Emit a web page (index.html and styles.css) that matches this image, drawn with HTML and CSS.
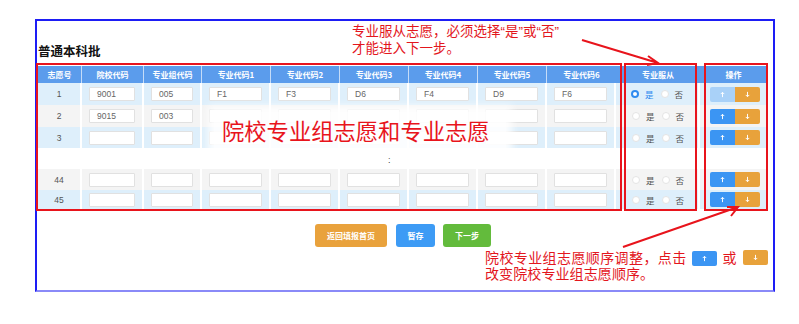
FILE: index.html
```html
<!DOCTYPE html>
<html lang="zh-CN">
<head>
<meta charset="utf-8">
<title>普通本科批</title>
<link rel="stylesheet" href="styles.css">
</head>
<body>
<div class="page">
  <div class="frame">
    <div class="head"><h1 class="title">普通本科批</h1></div>
    <div class="table">
      <div class="row hdr">
        <div class="c">志愿号</div><div class="c">院校代码</div><div class="c">专业组代码</div>
        <div class="c">专业代码1</div><div class="c">专业代码2</div><div class="c">专业代码3</div>
        <div class="c">专业代码4</div><div class="c">专业代码5</div><div class="c">专业代码6</div>
        <div class="c">专业服从</div><div class="c">操作</div>
      </div>
      <div class="row blue r1">
        <div class="c num">1</div>
        <div class="c"><span class="inp">9001</span></div><div class="c"><span class="inp">005</span></div>
        <div class="c"><span class="inp">F1</span></div><div class="c"><span class="inp">F3</span></div><div class="c"><span class="inp">D6</span></div>
        <div class="c"><span class="inp">F4</span></div><div class="c"><span class="inp">D9</span></div><div class="c"><span class="inp">F6</span></div>
        <div class="c radios"><span class="radio on"></span><span class="lbl on">是</span><span class="radio"></span><span class="lbl">否</span></div>
        <div class="c ops"><span class="btn up dis"><svg viewBox="0 0 8 8"><path d="M4 7V1.5M2 3.5L4 1.5 6 3.5" /></svg></span><span class="btn down"><svg viewBox="0 0 8 8"><path d="M4 1v5.5M2 4.5L4 6.5 6 4.5" /></svg></span></div>
      </div>
      <div class="row grey r2">
        <div class="c num">2</div>
        <div class="c"><span class="inp">9015</span></div><div class="c"><span class="inp">003</span></div>
        <div class="c"><span class="inp"></span></div><div class="c"><span class="inp"></span></div><div class="c"><span class="inp"></span></div>
        <div class="c"><span class="inp"></span></div><div class="c"><span class="inp"></span></div><div class="c"><span class="inp"></span></div>
        <div class="c radios"><span class="radio"></span><span class="lbl">是</span><span class="radio"></span><span class="lbl">否</span></div>
        <div class="c ops"><span class="btn up"><svg viewBox="0 0 8 8"><path d="M4 7V1.5M2 3.5L4 1.5 6 3.5" /></svg></span><span class="btn down"><svg viewBox="0 0 8 8"><path d="M4 1v5.5M2 4.5L4 6.5 6 4.5" /></svg></span></div>
      </div>
      <div class="row blue r3">
        <div class="c num">3</div>
        <div class="c"><span class="inp"></span></div><div class="c"><span class="inp"></span></div>
        <div class="c"><span class="inp"></span></div><div class="c"><span class="inp"></span></div><div class="c"><span class="inp"></span></div>
        <div class="c"><span class="inp"></span></div><div class="c"><span class="inp"></span></div><div class="c"><span class="inp"></span></div>
        <div class="c radios"><span class="radio"></span><span class="lbl">是</span><span class="radio"></span><span class="lbl">否</span></div>
        <div class="c ops"><span class="btn up"><svg viewBox="0 0 8 8"><path d="M4 7V1.5M2 3.5L4 1.5 6 3.5" /></svg></span><span class="btn down"><svg viewBox="0 0 8 8"><path d="M4 1v5.5M2 4.5L4 6.5 6 4.5" /></svg></span></div>
      </div>
      <div class="row gap"><span class="dots">:</span></div>
      <div class="row grey r44">
        <div class="c num">44</div>
        <div class="c"><span class="inp"></span></div><div class="c"><span class="inp"></span></div>
        <div class="c"><span class="inp"></span></div><div class="c"><span class="inp"></span></div><div class="c"><span class="inp"></span></div>
        <div class="c"><span class="inp"></span></div><div class="c"><span class="inp"></span></div><div class="c"><span class="inp"></span></div>
        <div class="c radios"><span class="radio"></span><span class="lbl">是</span><span class="radio"></span><span class="lbl">否</span></div>
        <div class="c ops"><span class="btn up"><svg viewBox="0 0 8 8"><path d="M4 7V1.5M2 3.5L4 1.5 6 3.5" /></svg></span><span class="btn down"><svg viewBox="0 0 8 8"><path d="M4 1v5.5M2 4.5L4 6.5 6 4.5" /></svg></span></div>
      </div>
      <div class="row blue r45">
        <div class="c num">45</div>
        <div class="c"><span class="inp"></span></div><div class="c"><span class="inp"></span></div>
        <div class="c"><span class="inp"></span></div><div class="c"><span class="inp"></span></div><div class="c"><span class="inp"></span></div>
        <div class="c"><span class="inp"></span></div><div class="c"><span class="inp"></span></div><div class="c"><span class="inp"></span></div>
        <div class="c radios"><span class="radio"></span><span class="lbl">是</span><span class="radio"></span><span class="lbl">否</span></div>
        <div class="c ops"><span class="btn up"><svg viewBox="0 0 8 8"><path d="M4 7V1.5M2 3.5L4 1.5 6 3.5" /></svg></span><span class="btn down"><svg viewBox="0 0 8 8"><path d="M4 1v5.5M2 4.5L4 6.5 6 4.5" /></svg></span></div>
      </div>
    </div>
    <div class="actions">
      <span class="abtn orange">返回填报首页</span>
      <span class="abtn blue-b">暂存</span>
      <span class="abtn green">下一步</span>
    </div>
  </div>

  <div class="box box-main"></div>
  <div class="box box-follow"></div>
  <div class="box box-op"></div>

  <div class="label-overlay">院校专业组志愿和专业志愿</div>

  <div class="note note-top">专业服从志愿，必须选择“是”或“否”<br>才能进入下一步。</div>

  <div class="note note-bottom">
    <div class="nl nl1"><span>院校专业组志愿顺序调整，点击</span><span class="nbtn up"><svg viewBox="0 0 8 8"><path d="M4 7V1.5M2 3.5L4 1.5 6 3.5" /></svg></span><span class="or">或</span><span class="nbtn down"><svg viewBox="0 0 8 8"><path d="M4 1v5.5M2 4.5L4 6.5 6 4.5" /></svg></span></div>
    <div class="nl nl2">改变院校专业组志愿顺序。</div>
  </div>

  <svg class="arrows" viewBox="0 0 799 324" width="799" height="324">
    <path d="M582 40 L658 63 M648 56 L658 63 L647 65" />
    <path d="M623 247 L738 207 M727 207 L738 207 L731 216" />
  </svg>
</div>
</body>
</html>
```
FILE: styles.css
```css
* { box-sizing: border-box; }
html, body { margin: 0; padding: 0; background: #fff; }
body { font-family: "Noto Sans CJK SC", "Noto Sans", sans-serif; }

.page { position: relative; width: 799px; height: 324px; overflow: hidden; }

.frame {
  margin: 19px 0 0 35px;
  width: 740px;
  height: 273px;
  border: 2px solid #1d1df5;
  border-bottom-color: #8a8af8;
  display: flex;
  flex-direction: column;
}

.head { height: 45px; display: flex; align-items: flex-end; padding: 0 0 8px 1px; }
.title { margin: 0; font-size: 12.5px; line-height: 15px; font-weight: 700; color: #111; }

.table { margin-left: 1px; width: 730px; }
.row { display: grid; grid-template-columns: 44px 62px 58px 69px 69px 69px 69px 69px 69px 84px 68px; }
.c { display: flex; align-items: center; justify-content: center; border-right: 2px solid #fff; min-width: 0; }

.hdr { height: 17px; background: #5b9cec; }
.hdr .c { color: #fff; font-size: 8px; font-weight: 700; border-right: 1px solid rgba(255,255,255,0.65); }
.hdr .c:nth-child(9) { border-right: 0; }
.hdr .c:nth-child(10) { border-right: 0; }

.blue { background: #deeffb; }
.grey { background: #f4f4f4; }
.r1 { height: 22px; }
.r2 { height: 22px; }
.r3 { height: 21px; }
.gap { height: 21px; display: block; background: #fff; }
.r44 { height: 21px; }
.r45 { height: 19px; }

.num { font-size: 8.5px; color: #555; font-family: "Liberation Sans", sans-serif; }

.inp {
  display: block;
  width: 100%;
  margin: 0 7px;
  height: 14px;
  background: #fff;
  border: 1px solid #e1e1e1;
  border-radius: 1px;
  font-family: "Liberation Sans", sans-serif;
  font-size: 8.5px;
  line-height: 12px;
  color: #666;
  padding-left: 7px;
}

.dots { display: block; padding: 8px 0 0 350px; font-size: 9px; line-height: 8px; color: #333; font-family: "Liberation Sans", sans-serif; }

.radios { justify-content: flex-start; padding-left: 16px; }
.radio { width: 8px; height: 8px; border-radius: 50%; background: #fff; border: 1px solid #e4e4e4; flex: none; }
.radio.on { background: #fff; border: 2.5px solid #2f8bef; }
.lbl { font-size: 8.5px; color: #555; margin: 0 7px 0 6px; line-height: 10px; }
.lbl.on { color: #2f8bef; }
.r1 .radios { padding-left: 15px; }

.ops { justify-content: flex-start; padding-left: 10px; border-right: 0; }
.btn { width: 25px; height: 15px; display: flex; align-items: center; justify-content: center; }
.btn svg, .nbtn svg { width: 7px; height: 7px; fill: none; stroke: #fff; stroke-width: 1.1; }
.btn.up { background: #3b95f3; border-radius: 2px 0 0 2px; }
.btn.up.dis { background: #a9d1f8; }
.btn.down { background: #e8a23b; border-radius: 0 2px 2px 0; }

.actions { display: flex; justify-content: center; gap: 9px; margin-top: 15px; padding-right: 4px; }
.abtn { height: 23px; display: flex; align-items: center; justify-content: center; color: #fff; font-size: 8px; font-weight: 700; border-radius: 3px; }
.abtn.orange { width: 72px; background: #e9a23c; }
.abtn.blue-b { width: 39px; background: #3d9bf5; margin-right: -1px; }
.abtn.green { width: 48px; background: #63bb3c; }

.box { position: absolute; border: 2px solid #e8141c; }
.box-main { left: 36px; top: 63px; width: 586px; height: 148px; }
.box-follow { left: 624px; top: 63px; width: 73px; height: 148px; }
.box-op { left: 704px; top: 63px; width: 64px; height: 148px; }

.label-overlay {
  position: absolute;
  left: 214px; top: 112px; width: 292px; height: 37px;
  background: rgba(255,255,255,0.88);
  box-shadow: 0 0 8px 6px rgba(255,255,255,0.88);
  color: #e8141c;
  font-size: 22.3px;
  line-height: 37px;
  padding-left: 8px;
  white-space: nowrap;
}

.note { position: absolute; color: #e3161d; white-space: nowrap; font-family: "Liberation Sans", "Noto Sans CJK SC", sans-serif; }
.note-top { left: 352px; top: 23px; font-size: 13.5px; line-height: 17px; }
.note-bottom { left: 485px; top: 250px; font-size: 14px; }
.nl { display: flex; align-items: center; line-height: 16px; }
.nl1 { height: 16px; letter-spacing: 0.4px; }
.nbtn { width: 25px; height: 15px; display: flex; align-items: center; justify-content: center; border-radius: 2px; }
.nbtn.up { background: #3b95f3; margin-left: 5px; }
.nbtn.down { background: #e8a23b; margin-top: -2px; }
.or { margin: 0 6px 0 6px; letter-spacing: 0; }
.nl2 { letter-spacing: 0.1px; }

.arrows { position: absolute; left: 0; top: 0; fill: none; stroke: #e8141c; stroke-width: 2; }
```
